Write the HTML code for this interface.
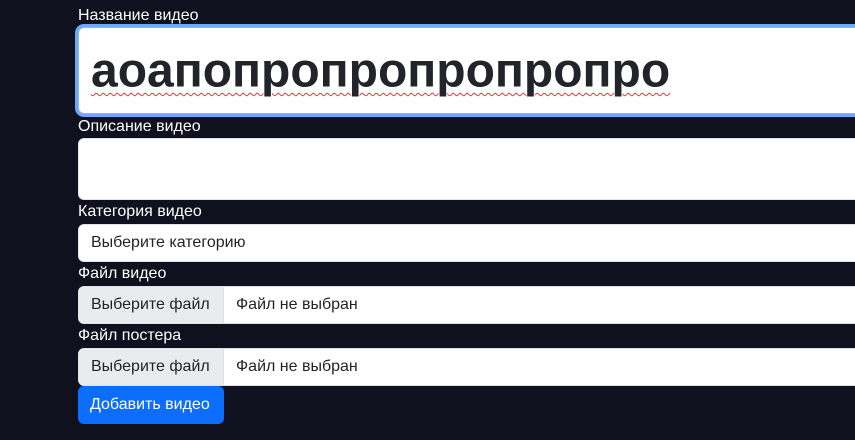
<!DOCTYPE html>
<html><head><meta charset="utf-8"><style>
body{margin:0;background:#10111e;width:855px;height:440px;overflow:hidden;font-family:"Liberation Sans",Arial,sans-serif;font-size:16px;color:#212529;position:relative}
.l{position:absolute;left:78px;color:#fff;font-size:16px;line-height:18px}
.b{position:absolute;left:78px;width:800px;background:#fff;border:1px solid #dee2e6;border-radius:6px;box-sizing:border-box}
.t{position:absolute;left:12px;top:50%;transform:translateY(-50%);white-space:nowrap}
.f{position:absolute;left:0;top:0;bottom:0;width:144px;background:#e9ecef;border-right:1px solid #dee2e6;border-radius:6px 0 0 6px}
</style></head><body>
<div class="l" style="top:7px">Название видео</div>
<div class="b" style="top:27px;height:87px;border:1px solid #86b7fe;box-shadow:0 0 0 3px #6ea8fe"><div class="t" style="left:12px;font-size:48px;font-weight:bold;text-decoration:underline wavy #e33;text-decoration-thickness:1px;text-underline-offset:6px">аоапопропропропропро</div></div>
<div class="l" style="top:118px">Описание видео</div>
<div class="b" style="top:138px;height:62px"></div>
<div class="l" style="top:203px">Категория видео</div>
<div class="b" style="top:224px;height:38px"><div class="t">Выберите категорию</div></div>
<div class="l" style="top:265px">Файл видео</div>
<div class="b" style="top:286px;height:38px"><div class="f"><div class="t">Выберите файл</div></div><div class="t" style="left:157px">Файл не выбран</div></div>
<div class="l" style="top:327px">Файл постера</div>
<div class="b" style="top:348px;height:38px"><div class="f"><div class="t">Выберите файл</div></div><div class="t" style="left:157px">Файл не выбран</div></div>
<div style="position:absolute;left:78px;top:386px;width:146px;height:38px;background:#0d6efd;border-radius:6px;color:#fff"><div class="t">Добавить видео</div></div>
</body></html>
